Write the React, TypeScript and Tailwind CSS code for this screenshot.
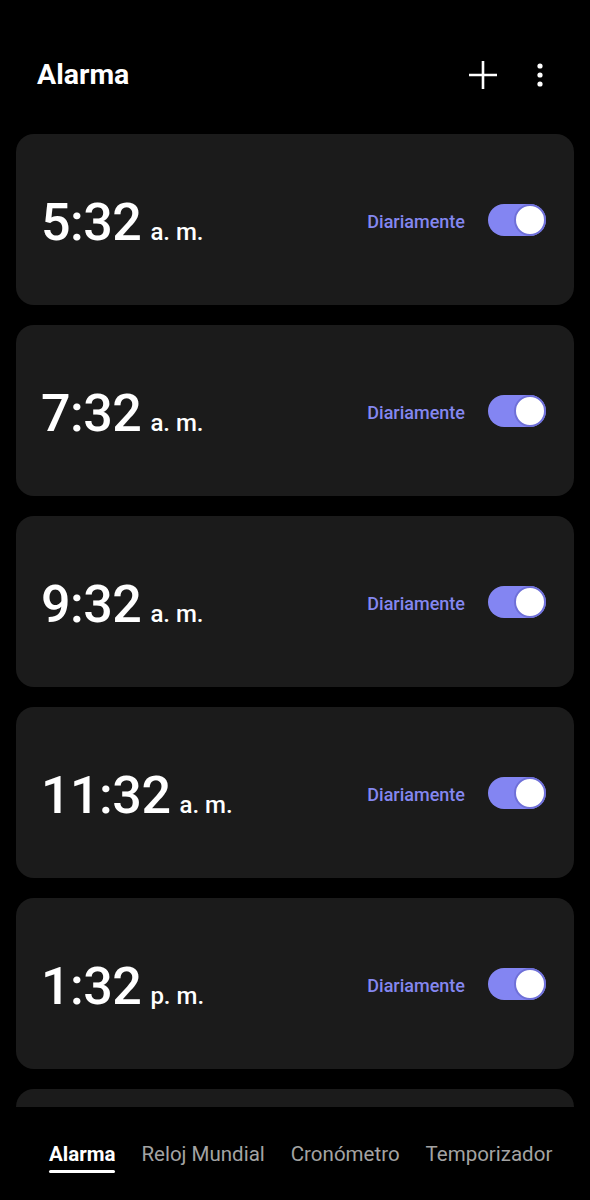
const alarms = [
  { time: "5:32", period: "a. m." },
  { time: "7:32", period: "a. m." },
  { time: "9:32", period: "a. m." },
  { time: "11:32", period: "a. m." },
  { time: "1:32", period: "p. m." },
  { time: "3:32", period: "p. m." },
];

const tabs = ["Alarma", "Reloj Mundial", "Cronómetro", "Temporizador"];

function Toggle() {
  return (
    <div className="relative h-[32px] w-[58px] rounded-full bg-[#8385f2]">
      <div className="absolute right-0 top-0 h-[32px] w-[32px] rounded-full border-2 border-[#6f70d8] bg-white" />
    </div>
  );
}

function AlarmCard({ time, period }: { time: string; period: string }) {
  return (
    <div className="flex h-[171px] shrink-0 items-center justify-between rounded-[18px] bg-[#1b1b1b] pl-[25px] pr-[28px]">
      <div className="flex items-baseline gap-[9px] pt-[6px] text-white">
        <span className="text-[52px] font-medium leading-none tracking-[-0.5px]">{time}</span>
        <span className="text-[24px] font-medium leading-none">{period}</span>
      </div>
      <div className="flex items-center gap-[23px]">
        <span className="pt-[3px] text-[18px] font-medium text-[#8487f0]">Diariamente</span>
        <Toggle />
      </div>
    </div>
  );
}

export default function App() {
  return (
    <div
      className="flex h-[1200px] w-[590px] flex-col overflow-hidden bg-black"
      style={{ fontFamily: "Roboto, 'Noto Sans', sans-serif" }}
    >
      {/* Header */}
      <div className="flex h-[134px] shrink-0 items-center justify-between pl-[37px] pr-[47px] pt-4">
        <h1 className="text-[28.5px] font-bold text-white">Alarma</h1>
        <div className="flex items-center gap-[39px]">
          <svg width="30" height="30" viewBox="0 0 30 30" fill="none">
            <path d="M15 1v28M1 15h28" stroke="white" strokeWidth="2.6" />
          </svg>
          <svg width="6" height="24" viewBox="0 0 6 24" fill="white">
            <circle cx="3" cy="3" r="2.6" />
            <circle cx="3" cy="12" r="2.6" />
            <circle cx="3" cy="21" r="2.6" />
          </svg>
        </div>
      </div>

      {/* Alarm list */}
      <div className="flex flex-1 flex-col gap-5 overflow-hidden px-4">
        {alarms.map((a) => (
          <AlarmCard key={a.time + a.period} time={a.time} period={a.period} />
        ))}
      </div>

      {/* Bottom tabs */}
      <div className="flex h-[93px] shrink-0 items-start gap-[26px] bg-black pl-[49px] pt-[33px]">
        {tabs.map((t, i) => (
          <div key={t} className="flex flex-col">
            <span
              className={
                i === 0
                  ? "text-[20.5px] font-bold leading-[28px] text-white"
                  : "text-[20.5px] font-normal leading-[28px] text-[#a3a3a3]"
              }
            >
              {t}
            </span>
            {i === 0 && <div className="mt-[2px] h-[3px] rounded-full bg-white" />}
          </div>
        ))}
      </div>
    </div>
  );
}
